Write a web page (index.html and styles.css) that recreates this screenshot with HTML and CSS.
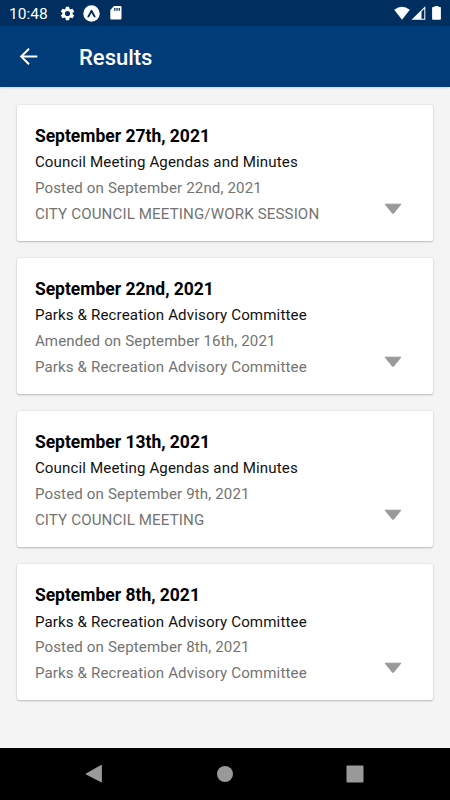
FILE: index.html
```html
<!DOCTYPE html>
<html lang="en">
<head>
<meta charset="utf-8">
<title>Results</title>
<link rel="stylesheet" href="styles.css">
</head>
<body>
<div class="screen">
  <div class="status">
    <span class="clock">10:48</span>
    <svg class="gear" width="17" height="17" viewBox="0 0 24 24"><path d="M19.14 12.94c.04-.3.06-.61.06-.94 0-.32-.02-.64-.07-.94l2.03-1.58a.49.49 0 0 0 .12-.61l-1.92-3.32a.488.488 0 0 0-.59-.22l-2.39.96c-.5-.38-1.03-.7-1.62-.94l-.36-2.54a.484.484 0 0 0-.48-.41h-3.84c-.24 0-.43.17-.47.41l-.36 2.54c-.59.24-1.13.57-1.62.94l-2.39-.96c-.22-.08-.47 0-.59.22L2.74 8.87c-.12.21-.08.47.12.61l2.03 1.58c-.05.3-.09.63-.09.94s.02.64.07.94l-2.03 1.58a.49.49 0 0 0-.12.61l1.92 3.32c.12.22.37.29.59.22l2.39-.96c.5.38 1.03.7 1.62.94l.36 2.54c.05.24.24.41.48.41h3.84c.24 0 .44-.17.47-.41l.36-2.54c.59-.24 1.13-.56 1.62-.94l2.39.96c.22.08.47 0 .59-.22l1.92-3.32c.12-.22.07-.47-.12-.61l-2.01-1.58zM12 15.6A3.6 3.6 0 1 1 12 8.400a3.6 3.6 0 0 1 0 7.200z"/></svg>
    <svg class="expo" width="17" height="17" viewBox="0 0 17 17"><circle cx="8.500" cy="8.500" r="8.200"/><path class="chevron" d="M5.300 11.500C6.800 9.500 7.500 7.500 8.500 5.800C9.500 7.500 10.200 9.500 11.700 11.500"/></svg>
    <svg class="sd" width="12" height="14" viewBox="0 0 12 14"><path fill-rule="evenodd" d="M4 0H10.500Q11.500 0 11.500 1V12.600Q11.500 13.600 10.500 13.600H1.300Q.3 13.600 .3 12.600V4zM4.200 2V4.700H5.500V2zM6.400 2V4.700H7.700V2zM8.600 2V4.700H9.900V2z"/></svg>
    <svg class="signals" width="50" height="16" viewBox="0 0 50 16"><path d="M.2 3.700Q8-2.300 15.800 3.700L8 13.700z"/><path fill-rule="evenodd" d="M31.300.3V13.700H17.500zM27.500 5.500V12.700H30.300V2.700z"/><path d="M38.900 1H40.500V0H44.500V1H46.100Q46.900 1 46.900 1.800V13Q46.900 13.800 46.100 13.800H38.900Q38.100 13.800 38.100 13V1.800Q38.100 1 38.900 1z"/></svg>
  </div>
  <header class="appbar">
    <svg class="back" width="19" height="19" viewBox="0 0 19 19"><path d="M18.300 9.500H2.500M10 1.700L2.200 9.500L10 17.300"/></svg>
    <h1>Results</h1>
  </header>
  <main class="list">
    <article class="card">
      <h2>September 27th, 2021</h2>
      <p class="kind">Council Meeting Agendas and Minutes</p>
      <p>Posted on September 22nd, 2021</p>
      <p>CITY COUNCIL MEETING/WORK SESSION</p>
      <svg class="caret" width="18" height="12" viewBox="0 0 18 12"><path d="M1.100 1.200H16.900L9.600 10.200Q9 10.900 8.400 10.200z"/></svg>
    </article>
    <article class="card">
      <h2>September 22nd, 2021</h2>
      <p class="kind">Parks &amp; Recreation Advisory Committee</p>
      <p>Amended on September 16th, 2021</p>
      <p>Parks &amp; Recreation Advisory Committee</p>
      <svg class="caret" width="18" height="12" viewBox="0 0 18 12"><path d="M1.100 1.200H16.900L9.600 10.200Q9 10.900 8.400 10.200z"/></svg>
    </article>
    <article class="card">
      <h2>September 13th, 2021</h2>
      <p class="kind">Council Meeting Agendas and Minutes</p>
      <p>Posted on September 9th, 2021</p>
      <p>CITY COUNCIL MEETING</p>
      <svg class="caret" width="18" height="12" viewBox="0 0 18 12"><path d="M1.100 1.200H16.900L9.600 10.200Q9 10.900 8.400 10.200z"/></svg>
    </article>
    <article class="card">
      <h2>September 8th, 2021</h2>
      <p class="kind">Parks &amp; Recreation Advisory Committee</p>
      <p>Posted on September 8th, 2021</p>
      <p>Parks &amp; Recreation Advisory Committee</p>
      <svg class="caret" width="18" height="12" viewBox="0 0 18 12"><path d="M1.100 1.200H16.900L9.600 10.200Q9 10.900 8.400 10.200z"/></svg>
    </article>
  </main>
  <nav class="navbar">
    <svg width="18" height="20" viewBox="0 0 18 20"><path d="M1 9.600L16 1.100Q16.900.7 16.900 1.600V17.800Q16.900 18.700 16 18.200L1 10.400Q.5 10 1 9.600z"/></svg>
    <svg width="18" height="18" viewBox="0 0 18 18"><circle cx="9" cy="9" r="8"/></svg>
    <svg width="18" height="18" viewBox="0 0 18 18"><rect x=".5" y=".5" width="17" height="17" rx="1"/></svg>
  </nav>
</div>
</body>
</html>
```

FILE: styles.css
```css
* { box-sizing: border-box; }
body { margin: 0; font-family: Roboto, "Liberation Sans", sans-serif; }
h1, h2, p { margin: 0; white-space: nowrap; }
svg { display: block; flex: none; }

.screen {
  width: 450px;
  height: 800px;
  display: flex;
  flex-direction: column;
  overflow: hidden;
  background: #f4f4f4;
}

.status {
  height: 26px;
  flex: none;
  display: flex;
  align-items: center;
  padding: 0 0 0 9px;
  background: #002f5f;
  color: #fff;
  fill: #fff;
}
.clock { width: 49.500px; font-size: 15.500px; line-height: 26px; padding-top: 2px; }
.expo { margin-left: 7px; }
.expo .chevron { fill: none; stroke: #002f5f; stroke-width: 1.8; stroke-linecap: round; stroke-linejoin: round; }
.sd { margin-left: 10px; }
.signals { margin: 2px 6px 0 auto; }

.appbar {
  height: 61px;
  flex: none;
  display: flex;
  align-items: center;
  padding: 0 0 0 19px;
  background: #003c78;
  color: #fff;
  box-shadow: 0 1px 2px rgba(0, 0, 0, .12);
}
.back { fill: none; stroke: #fff; stroke-width: 2; }
.appbar h1 { margin: 3px 0 0 41px; font-size: 22px; font-weight: 500; line-height: 30px; }

.list {
  flex: 1;
  display: flex;
  flex-direction: column;
  gap: 17.2px;
  padding: 17.600px 17.500px 0 17.400px;
}
.card {
  position: relative;
  height: 136px;
  flex: none;
  padding: 18px 17.500px 0;
  background: #fff;
  border-radius: 2px;
  box-shadow: 0 1px 2px rgba(0, 0, 0, .22), 0 0 2px rgba(0, 0, 0, .12);
}
.card h2 { margin-bottom: 1.500px; font-size: 17.500px; font-weight: 700; line-height: 26px; letter-spacing: -.01px; color: #000; }
.card p { font-size: 15.100px; font-weight: 400; line-height: 25.700px; letter-spacing: .13px; color: #737373; }
.card .kind { color: #111; }
.caret { position: absolute; right: 31px; bottom: 26px; fill: #999; stroke: #999; stroke-width: 1; stroke-linejoin: round; }

.navbar {
  height: 52px;
  flex: none;
  display: flex;
  align-items: center;
  justify-content: space-between;
  padding: 0 86px 0 85px;
  background: #000;
  fill: #999;
}
```
